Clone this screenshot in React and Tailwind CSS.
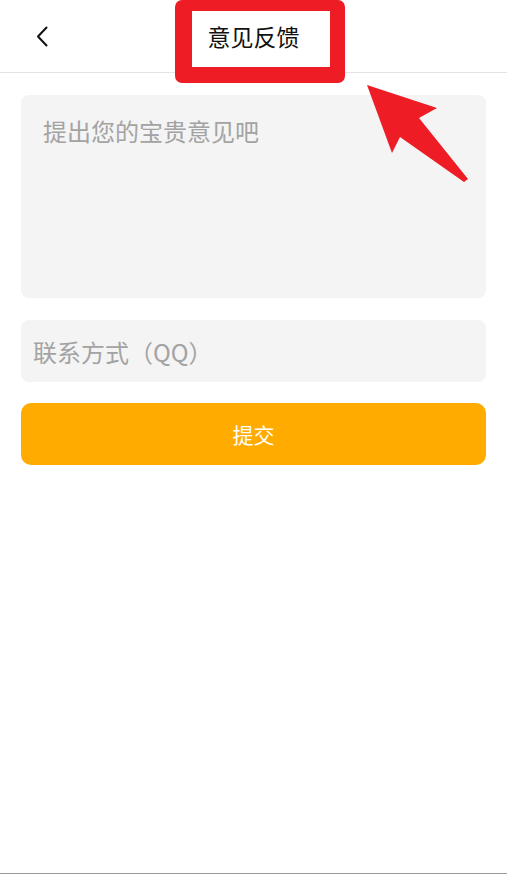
import React from "react";

export default function App() {
  const font = { fontFamily: '"Noto Sans CJK SC", "Noto Sans", sans-serif' };
  return (
    <div className="relative w-[507px] h-[874px] bg-white border-b border-[#9a9a9a] overflow-hidden" style={font}>
      <div className="relative h-[73px] border-b border-[#e3e3e3] flex items-center justify-center">
        <button className="absolute left-[33px] top-[24px] w-[18px] h-[24px] flex items-center justify-center">
          <svg width="12" height="21" viewBox="0 0 12 21" fill="none">
            <path d="M10.5 1.5 L2 10.5 L10.5 19.5" stroke="#111" strokeWidth="2" strokeLinecap="round" strokeLinejoin="round" />
          </svg>
        </button>
        <h1 className="text-[23px] leading-[30px] text-[#111] font-normal -mt-[1px]">意见反馈</h1>
      </div>

      <div className="px-[21px] pt-[22px] flex flex-col">
        <textarea
          className="h-[203px] w-full bg-[#f4f4f4] rounded-[8px] resize-none outline-none px-[22px] pt-[23px] text-[24px] leading-[26px] text-[#333] placeholder:text-[#a3a3a3]"
          placeholder="提出您的宝贵意见吧"
        />
        <input
          className="mt-[22px] h-[62px] w-full bg-[#f4f4f4] rounded-[8px] outline-none px-[12px] text-[24px] text-[#333] placeholder:text-[#a3a3a3]"
          placeholder="联系方式（QQ）"
        />
        <button className="mt-[21px] h-[62px] w-full bg-[#ffab00] rounded-[10px] text-white text-[21px] leading-[28px] flex items-center justify-center">
          提交
        </button>
      </div>

      <div className="absolute left-[175px] top-0 w-[170px] h-[83px] rounded-[7px] border-[#ee1c25] border-l-[17px] border-r-[15px] border-t-[11px] border-b-[16px] pointer-events-none" />

      <svg className="absolute left-0 top-0 pointer-events-none" width="507" height="200" viewBox="0 0 507 200">
        <polygon points="367,85 437,108 419,118 468,179 464,182 400,137 392,153" fill="#ee1c25" />
      </svg>
    </div>
  );
}
